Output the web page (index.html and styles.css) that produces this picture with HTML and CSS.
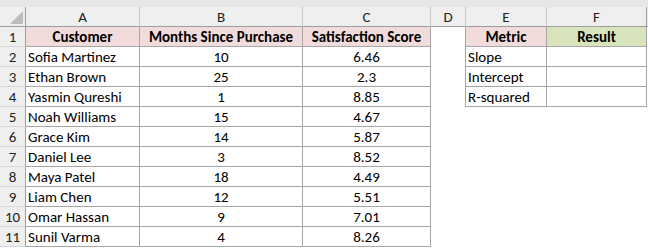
FILE: index.html
```html
<!DOCTYPE html>
<html>
<head>
<meta charset="utf-8">
<link rel="stylesheet" href="styles.css">
</head>
<body>
<div class="sheet">
  <div class="topstrip"></div>
  <div class="grid">
    <div class="ch corner"><span class="tri"></span></div>
    <div class="ch">A</div>
    <div class="ch">B</div>
    <div class="ch">C</div>
    <div class="ch">D</div>
    <div class="ch">E</div>
    <div class="ch last">F</div>
    <div class="ch tail"></div>

    <div class="rh">1</div>
    <div class="c hd pink">Customer</div>
    <div class="c hd pink">Months Since Purchase</div>
    <div class="c hd pink">Satisfaction Score</div>
    <div class="c gap edge"></div>
    <div class="c hd pink">Metric</div>
    <div class="c hd green">Result</div>

    <div class="rh">2</div>
    <div class="c">Sofia Martinez</div>
    <div class="c ctr">10</div>
    <div class="c ctr">6.46</div>
    <div class="c gap edge"></div>
    <div class="c">Slope</div>
    <div class="c"></div>

    <div class="rh">3</div>
    <div class="c">Ethan Brown</div>
    <div class="c ctr">25</div>
    <div class="c ctr">2.3</div>
    <div class="c gap edge"></div>
    <div class="c">Intercept</div>
    <div class="c"></div>

    <div class="rh">4</div>
    <div class="c">Yasmin Qureshi</div>
    <div class="c ctr">1</div>
    <div class="c ctr">8.85</div>
    <div class="c gap edge"></div>
    <div class="c">R-squared</div>
    <div class="c"></div>

    <div class="rh">5</div>
    <div class="c">Noah Williams</div>
    <div class="c ctr">15</div>
    <div class="c ctr">4.67</div>
    <div class="c gap"></div>
    <div class="c blank"></div>
    <div class="c blank"></div>

    <div class="rh">6</div>
    <div class="c">Grace Kim</div>
    <div class="c ctr">14</div>
    <div class="c ctr">5.87</div>
    <div class="c gap"></div>
    <div class="c blank"></div>
    <div class="c blank"></div>

    <div class="rh">7</div>
    <div class="c">Daniel Lee</div>
    <div class="c ctr">3</div>
    <div class="c ctr">8.52</div>
    <div class="c gap"></div>
    <div class="c blank"></div>
    <div class="c blank"></div>

    <div class="rh">8</div>
    <div class="c">Maya Patel</div>
    <div class="c ctr">18</div>
    <div class="c ctr">4.49</div>
    <div class="c gap"></div>
    <div class="c blank"></div>
    <div class="c blank"></div>

    <div class="rh">9</div>
    <div class="c">Liam Chen</div>
    <div class="c ctr">12</div>
    <div class="c ctr">5.51</div>
    <div class="c gap"></div>
    <div class="c blank"></div>
    <div class="c blank"></div>

    <div class="rh">10</div>
    <div class="c">Omar Hassan</div>
    <div class="c ctr">9</div>
    <div class="c ctr">7.01</div>
    <div class="c gap"></div>
    <div class="c blank"></div>
    <div class="c blank"></div>

    <div class="rh">11</div>
    <div class="c">Sunil Varma</div>
    <div class="c ctr">4</div>
    <div class="c ctr">8.26</div>
    <div class="c gap"></div>
    <div class="c blank"></div>
    <div class="c blank"></div>
  </div>
</div>
</body>
</html>
```
FILE: styles.css
```css
* { box-sizing: border-box; }
html, body { margin: 0; padding: 0; background: #ffffff; }
body {
  font-family: Carlito, Lato, "Liberation Sans", sans-serif;
  font-size: 15px;
  color: #000;
  overflow: hidden;
}
.sheet { width: 648px; height: 248px; overflow: hidden; }
.topstrip { height: 7px; background: #e6e6e6; }
.grid {
  display: grid;
  grid-template-columns: 26px 114px 163px 128px 35px 81px 100px 1px;
  grid-auto-rows: 20px;
  background: #fff;
}
.ch {
  background: #efefef;
  border-right: 1px solid #c9c9c9;
  border-bottom: 1px solid #9e9e9e;
  display: flex;
  align-items: center;
  justify-content: center;
  color: #222;
  font-size: 15px;
  line-height: 1;
  padding-top: 1px;
}
.ch.last { border-right-color: #9e9e9e; }
.ch.tail { border-right: none; }
.corner { border-right-color: #9e9e9e; position: relative; }
.tri {
  position: absolute;
  right: 2px;
  bottom: 2px;
  width: 0; height: 0;
  border-left: 13px solid transparent;
  border-bottom: 13px solid #bdbdbd;
}
.rh {
  grid-column: 1;
  background: #efefef;
  border-right: 1px solid #9e9e9e;
  border-bottom: 1px solid #d6d6d6;
  display: flex;
  align-items: center;
  justify-content: center;
  color: #222;
  line-height: 1;
  padding-top: 1px;
}
.c {
  border-right: 1px solid #a6a6a6;
  border-bottom: 1px solid #a6a6a6;
  padding: 1px 0 0 2px;
  display: flex;
  align-items: center;
  white-space: nowrap;
  line-height: 1;
}
.ctr { justify-content: center; padding-left: 0; }
.hd { justify-content: center; font-weight: bold; padding-left: 0; }
.pink { background: #f2dcdb; }
.green { background: #d8e4bc; }
.gap { border: none; }
.gap.edge { border-right: 1px solid #a6a6a6; }
.blank { border: none; }
```
